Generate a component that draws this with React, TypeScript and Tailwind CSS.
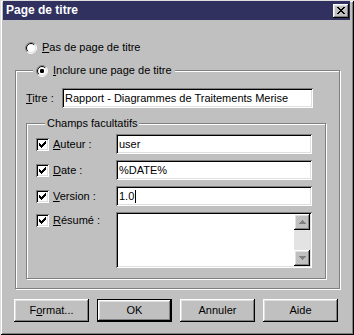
import React from 'react';

const raised =
  'shadow-[inset_-1px_-1px_0_#000,inset_1px_1px_0_#fff,inset_-2px_-2px_0_#808080,inset_2px_2px_0_#dfdfdf]';
const sunken =
  'shadow-[inset_1px_1px_0_#808080,inset_-1px_-1px_0_#fff,inset_2px_2px_0_#000,inset_-2px_-2px_0_#dfdfdf]';

function Radio({ checked }: { checked?: boolean }) {
  const half = (r: number) => {
    const d = r * 0.7071;
    return { a: [6 - d, 6 + d], b: [6 + d, 6 - d] };
  };
  const o = half(5.5);
  const i = half(4.5);
  return (
    <svg width="12" height="12" viewBox="0 0 12 12" className="shrink-0">
      <circle cx="6" cy="6" r="5" fill="#fff" />
      <path d={`M${o.a[0]} ${o.a[1]} A5.5 5.5 0 0 1 ${o.b[0]} ${o.b[1]}`} stroke="#808080" fill="none" />
      <path d={`M${o.a[0]} ${o.a[1]} A5.5 5.5 0 0 0 ${o.b[0]} ${o.b[1]}`} stroke="#fff" fill="none" />
      <path d={`M${i.a[0]} ${i.a[1]} A4.5 4.5 0 0 1 ${i.b[0]} ${i.b[1]}`} stroke="#000" fill="none" />
      <path d={`M${i.a[0]} ${i.a[1]} A4.5 4.5 0 0 0 ${i.b[0]} ${i.b[1]}`} stroke="#dfdfdf" fill="none" />
      {checked && <rect x="4" y="4" width="4" height="4" rx="1.2" fill="#000" />}
    </svg>
  );
}

function Check() {
  // classic 7x7 tick, one column at a time
  const cols = [2, 3, 4, 3, 2, 1, 0];
  return (
    <div className={`relative w-[13px] h-[13px] shrink-0 bg-white ${sunken}`}>
      <svg width="13" height="13" viewBox="0 0 13 13" className="absolute left-0 top-0" shapeRendering="crispEdges">
        {cols.map((y, x) => (
          <rect key={x} x={3 + x} y={3 + y} width="1" height="3" fill="#000" />
        ))}
      </svg>
    </div>
  );
}

function Field({ children, w }: { children?: React.ReactNode; w: string }) {
  return (
    <div className={`${w} h-[20px] bg-white ${sunken} pl-[3px] flex items-center text-black`}>{children}</div>
  );
}

function Arrow({ up }: { up?: boolean }) {
  return (
    <div className={`w-[16px] h-[16px] bg-[#c0c0c0] ${raised} flex items-center justify-center`}>
      <svg width="9" height="6" viewBox="0 0 9 6" shapeRendering="crispEdges">
        <path d={up ? 'M1 5 L4.5 1 L8 5 Z' : 'M1 1 L4.5 5 L8 1 Z'} fill="#808080" />
      </svg>
    </div>
  );
}

function Button({ children, def }: { children: React.ReactNode; def?: boolean }) {
  return (
    <div
      className={`w-[75px] h-[23px] flex items-center justify-center text-black bg-[#c0c0c0] ${
        def ? 'border border-black ' + raised : raised
      }`}
    >
      {children}
    </div>
  );
}

const rows = [
  { label: 'Auteur', key: 'A', rest: 'uteur :', value: 'user' },
  { label: 'Date', key: 'D', rest: 'ate :', value: '%DATE%' },
  { label: 'Version', key: 'V', rest: 'ersion :', value: '1.0', caret: true },
];

export default function App() {
  return (
    <div
      className="w-[354px] h-[335px] bg-[#c0c0c0] pt-[1px] pl-[3px] pr-[4px] text-[11px] leading-[13px] text-black shadow-[inset_1px_1px_0_#dfdfdf,inset_-1px_-1px_0_#000,inset_2px_2px_0_#fff,inset_-2px_-2px_0_#808080]"
      style={{ fontFamily: '"Liberation Sans", Arial, sans-serif' }}
    >
      {/* title bar */}
      <div className="h-[19px] bg-[#31315f] flex items-center justify-between pl-[3px] pr-[1px]">
        <span className="text-white font-bold text-[12px]">Page de titre</span>
        <div className={`w-[16px] h-[14px] bg-[#c0c0c0] ${raised} relative`}>
          <svg width="8" height="7" viewBox="0 0 8 7" className="absolute left-[4px] top-[3px]" shapeRendering="crispEdges">
            <path d="M0 0h2v1H0zM6 0h2v1H6zM1 1h2v1H1zM5 1h2v1H5zM2 2h4v1H2zM3 3h2v1H3zM2 4h4v1H2zM1 5h2v1H1zM5 5h2v1H5zM0 6h2v1H0zM6 6h2v1H6z" fill="#000" />
          </svg>
        </div>
      </div>

      <div className="pl-[22px] mt-[21px] flex items-center gap-[5px] h-[13px]">
        <Radio />
        <span>
          <u>P</u>as de page de titre
        </span>
      </div>

      <fieldset className="ml-[12px] mt-[10px] w-[325px] border border-[#808080] shadow-[inset_1px_1px_0_#fff,1px_1px_0_#fff] pl-[10px] pb-[9px]">
        <legend className="ml-[7px] px-[3px] h-[13px] flex items-center gap-[5px] bg-[#c0c0c0]">
          <Radio checked />
          <span>
            <u>I</u>nclure une page de titre
          </span>
        </legend>

        <div className="mt-[11px] flex items-center">
          <span className="w-[36px]">
            <u>T</u>itre :
          </span>
          <Field w="w-[251px]">Rapport - Diagrammes de Traitements Merise</Field>
        </div>

        <fieldset className="mt-[9px] w-[300px] border border-[#808080] shadow-[inset_1px_1px_0_#fff,1px_1px_0_#fff] pl-[9px] pb-[10px]">
          <legend className="ml-[9px] px-[2px] h-[13px] bg-[#c0c0c0]">Champs facultatifs</legend>

          <div className="mt-[4px] flex flex-col gap-[6px]">
            {rows.map((r) => (
              <div key={r.label} className="flex items-center">
                <Check />
                <span className="ml-[4px] w-[63px]">
                  <u>{r.key}</u>
                  {r.rest}
                </span>
                <Field w="w-[196px]">
                  {r.value}
                  {r.caret && <span className="ml-[1px] w-[1px] h-[13px] bg-black" />}
                </Field>
              </div>
            ))}

            <div className="flex items-start">
              <div className="mt-[2px]">
                <Check />
              </div>
              <span className="ml-[4px] w-[63px] mt-[2px]">
                <u>R</u>ésumé :
              </span>
              <div className={`w-[196px] h-[56px] bg-white ${sunken} p-[2px] flex justify-end`}>
                <div className="w-[16px] flex flex-col bg-[#e3e3e3]">
                  <Arrow up />
                  <div className="flex-1" />
                  <Arrow />
                </div>
              </div>
            </div>
          </div>
        </fieldset>
      </fieldset>

      <div className="mt-[10px] ml-[11px] w-[324px] flex justify-between">
        <Button>
          F<u>o</u>rmat...
        </Button>
        <Button def>OK</Button>
        <Button>Annuler</Button>
        <Button>Aide</Button>
      </div>
    </div>
  );
}
